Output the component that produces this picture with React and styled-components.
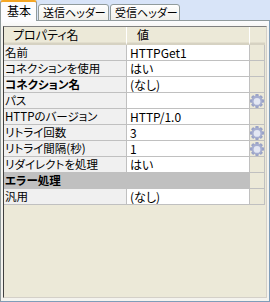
import { Fragment } from 'react';
import styled, { createGlobalStyle } from 'styled-components';

const Global = createGlobalStyle`
  html, body { margin: 0; padding: 0; background: #d8e4f8; }
  body {
    font-family: "Noto Sans CJK JP", "Liberation Sans", sans-serif;
    font-size: 12px;
    color: #000;
    font-feature-settings: "palt";
  }
`;

const Window = styled.div`
  width: 270px;
  height: 302px;
  display: flex;
  flex-direction: column;
  background: #d8e4f8;
`;

const TabStrip = styled.div`
  display: flex;
  align-items: flex-end;
  height: 21px;
  margin-bottom: -1px;
  position: relative;
  z-index: 1;
`;

const Tab = styled.div`
  box-sizing: border-box;
  width: ${p => p.w}px;
  height: ${p => (p.active ? 21 : 17)}px;
  border: 1px solid #919b9c;
  border-bottom: ${p => (p.active ? 'none' : '1px solid #919b9c')};
  border-top: ${p => (p.active ? '2px solid #f5a623' : '1px solid #919b9c')};
  border-radius: 3px 3px 0 0;
  background: ${p => (p.active ? '#fcfcfe' : 'linear-gradient(#ffffff, #f0efe9)')};
  padding-left: ${p => (p.active ? 6 : 4)}px;
  line-height: ${p => (p.active ? 18 : 15)}px;
  font-size: ${p => (p.active ? 12 : 11)}px;
  white-space: nowrap;
  overflow: hidden;
  margin-left: ${p => (p.first ? 0 : 1)}px;
`;

const Panel = styled.div`
  flex: 1;
  box-sizing: border-box;
  border: 1px solid #7f9db9;
  border-left-color: #919b9c;
  border-top-color: #919b9c;
  background: linear-gradient(#fcfcfe, #f4f3ee 8px);
  padding: 5px 2px 3px 2px;
  display: flex;
`;

const Grid = styled.div`
  flex: 1;
  box-sizing: border-box;
  border: 1px solid;
  border-color: #808080 #d4d0c8 #d4d0c8 #404040;
  background: #ece9d8;
  display: grid;
  grid-template-columns: 123px 123px 15px;
  grid-auto-rows: 16px;
  grid-template-rows: 18px;
  align-content: start;
`;

const HeadCell = styled.div`
  box-sizing: border-box;
  background: #ece9d8;
  border-bottom: 2px solid #d6d2c2;
  box-shadow: inset 0 -1px 0 #e2decd;
  border-right: ${p => (p.last ? 'none' : '1px solid #ffffff')};
  padding-left: ${p => p.pad}px;
  line-height: 16px;
  white-space: nowrap;
  overflow: hidden;
`;

const NameCell = styled.div`
  box-sizing: border-box;
  background: ${p => (p.group ? '#c0c0c0' : '#f0f0f0')};
  border-bottom: 1px solid #c0c0c0;
  border-right: 1px solid #c0c0c0;
  padding-left: 1px;
  font-size: 11.5px;
  line-height: 15px;
  font-weight: ${p => (p.bold ? 700 : 400)};
  white-space: nowrap;
  overflow: hidden;
`;

const ValueCell = styled.div`
  box-sizing: border-box;
  background: ${p => (p.group ? '#c0c0c0' : '#ffffff')};
  border-bottom: 1px solid #c0c0c0;
  border-right: 1px solid #c0c0c0;
  padding-left: 3px;
  line-height: 15px;
  white-space: nowrap;
  overflow: hidden;
`;

const ButtonCell = styled.div`
  box-sizing: border-box;
  background: #ece9d8;
  border-bottom: 1px solid #c0c0c0;
  border-right: 1px solid #c0c0c0;
  display: flex;
  align-items: center;
  justify-content: center;
  overflow: visible;
`;

const Gear = () => {
  const teeth = [];
  for (let i = 0; i < 8; i++) {
    teeth.push(
      <rect key={i} x="5.3" y="0" width="3.4" height="3.4" rx="0.8" fill="#9aa3c7"
        transform={`rotate(${i * 45} 7 7)`} />
    );
  }
  return (
    <svg width="14" height="14" viewBox="0 0 14 14">
      {teeth}
      <circle cx="7" cy="7" r="5.2" fill="#a6aed0" />
      <circle cx="7" cy="7.4" r="3.4" fill="#e3e7f3" />
    </svg>
  );
};

const rows = [
  { name: '名前', value: 'HTTPGet1' },
  { name: 'コネクションを使用', value: 'はい' },
  { name: 'コネクション名', value: '(なし)', bold: true },
  { name: 'パス', value: '', gear: true },
  { name: 'HTTPのバージョン', value: 'HTTP/1.0' },
  { name: 'リトライ回数', value: '3', gear: true },
  { name: 'リトライ間隔(秒)', value: '1', gear: true },
  { name: 'リダイレクトを処理', value: 'はい' },
  { name: 'エラー処理', group: true },
  { name: '汎用', value: '(なし)' },
];

export default function App() {
  return (
    <Window>
      <Global />
      <TabStrip>
        <Tab active first w={37}>基本</Tab>
        <Tab w={71}>送信ヘッダー</Tab>
        <Tab w={70}>受信ヘッダー</Tab>
      </TabStrip>
      <Panel>
        <Grid>
          <HeadCell pad={9}>プロパティ名</HeadCell>
          <HeadCell pad={10}>値</HeadCell>
          <HeadCell last />
          {rows.map(r => (
            <Fragment key={r.name}>
              <NameCell bold={r.bold || r.group} group={r.group}>{r.name}</NameCell>
              <ValueCell group={r.group}>{r.value}</ValueCell>
              <ButtonCell>{r.gear && <Gear />}</ButtonCell>
            </Fragment>
          ))}
        </Grid>
      </Panel>
    </Window>
  );
}
